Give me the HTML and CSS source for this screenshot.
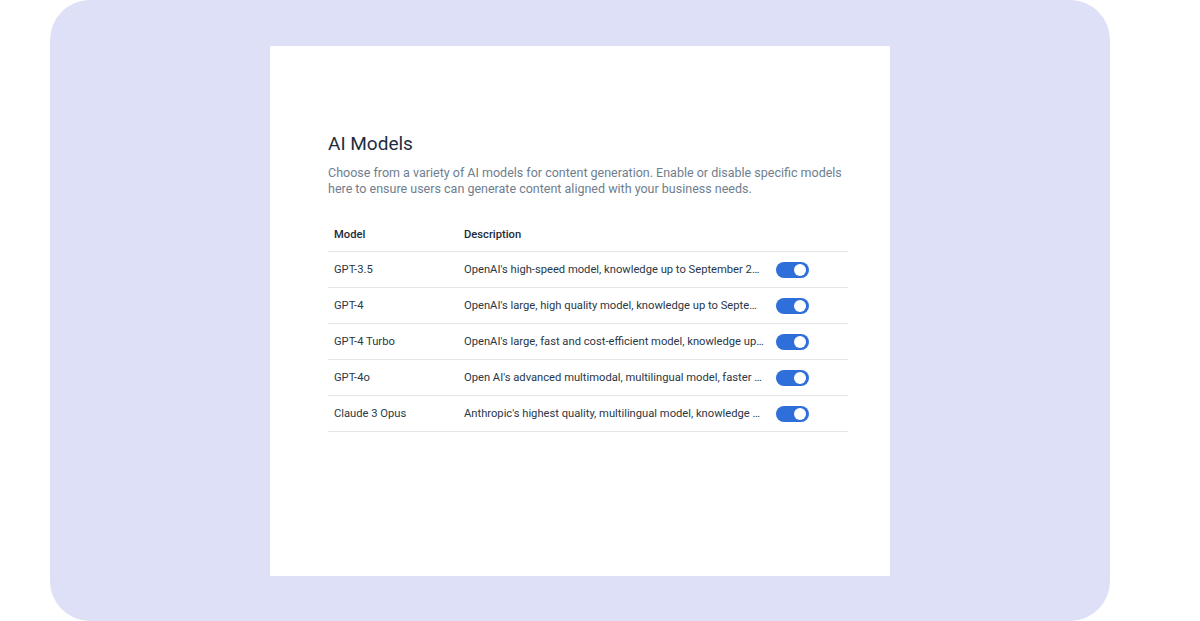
FILE: index.html
```html
<!DOCTYPE html>
<html>
<head>
<meta charset="utf-8">
<link rel="stylesheet" href="styles.css">
</head>
<body>
<div class="stage">
  <div class="panel">
    <div class="card">
      <h1 class="title">AI Models</h1>
      <p class="lead">Choose from a variety of AI models for content generation. Enable or disable specific models here to ensure users can generate content aligned with your business needs.</p>
      <div class="table">
        <div class="row head">
          <div class="c-model">Model</div>
          <div class="c-desc">Description</div>
          <div class="c-tog"></div>
        </div>
        <div class="row">
          <div class="c-model">GPT-3.5</div>
          <div class="c-desc">OpenAI's high-speed model, knowledge up to September 2021</div>
          <div class="c-tog"><span class="toggle"></span></div>
        </div>
        <div class="row">
          <div class="c-model">GPT-4</div>
          <div class="c-desc">OpenAI's large, high quality model, knowledge up to September 2021</div>
          <div class="c-tog"><span class="toggle"></span></div>
        </div>
        <div class="row">
          <div class="c-model">GPT-4 Turbo</div>
          <div class="c-desc">OpenAI's large, fast and cost-efficient model, knowledge up to December 2023</div>
          <div class="c-tog"><span class="toggle"></span></div>
        </div>
        <div class="row">
          <div class="c-model">GPT-4o</div>
          <div class="c-desc">Open AI's advanced multimodal, multilingual model, faster and cheaper</div>
          <div class="c-tog"><span class="toggle"></span></div>
        </div>
        <div class="row">
          <div class="c-model">Claude 3 Opus</div>
          <div class="c-desc">Anthropic's highest quality, multilingual model, knowledge up to August 2023</div>
          <div class="c-tog"><span class="toggle"></span></div>
        </div>
      </div>
    </div>
  </div>
</div>
</body>
</html>
```
FILE: styles.css
```css
* { box-sizing: border-box; }
html, body { margin: 0; padding: 0; background: #ffffff; }
body { font-family: Roboto, "Noto Sans", sans-serif; color: #1e2b3a; }
.stage { width: 1200px; height: 621px; padding: 0 90px 0 50px; }
.panel {
  height: 621px;
  background: #dde0f6;
  border-radius: 40px;
  padding-top: 46px;
  display: flex;
  justify-content: center;
}
.card {
  width: 620px;
  height: 530px;
  background: #ffffff;
  padding: 84px 42px 0 58px;
}
.title {
  margin: 0;
  font-size: 19px;
  line-height: 28px;
  font-weight: 400;
  color: #1d2d3e;
}
.lead {
  margin: 7px 0 0;
  font-size: 12.5px;
  line-height: 16px;
  color: #6e7e8e;
}
.table { margin-top: 20px; }
.row {
  display: flex;
  align-items: center;
  height: 36px;
  border-bottom: 1px solid #e3e6ea;
  font-size: 11.2px;
  color: #2a3746;
}
.row.head { height: 35px; font-weight: 500; color: #1d2a38; }
.c-model { width: 136px; padding-left: 6px; }
.c-desc {
  width: 300px;
  white-space: nowrap;
  overflow: hidden;
  text-overflow: ellipsis;
}
.c-tog { padding-left: 12px; display: flex; align-items: center; }
.toggle {
  position: relative;
  display: block;
  width: 33px;
  height: 16px;
  border-radius: 8px;
  background: #2f6fd9;
}
.toggle::after {
  content: "";
  position: absolute;
  right: 3px;
  top: 2px;
  width: 12px;
  height: 12px;
  border-radius: 50%;
  background: #ffffff;
}
```
